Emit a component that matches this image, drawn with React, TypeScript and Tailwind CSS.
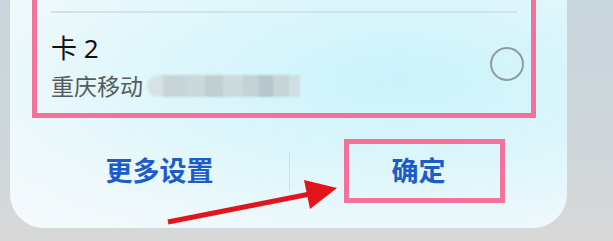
import React from "react";

export default function App() {
  const font = { fontFamily: '"Noto Sans", "Noto Sans CJK SC", sans-serif' };
  return (
    <div
      className="relative w-[613px] h-[241px] overflow-hidden bg-[linear-gradient(180deg,#c8d5dc_0%,#cfd7db_60%,#d8d8d8_100%)]"
      style={font}
    >
      <div className="ml-[10px] w-[557px] h-[228px] rounded-b-[34px] overflow-hidden bg-[radial-gradient(ellipse_at_70%_35%,#c9f3fb_0%,#dcf6fb_40%,#eef9fc_75%,#f6fafc_100%)] flex flex-col">
        <div className="ml-[22px] w-[504px] h-[128px] -mt-[10px] border-[5px] border-[#f2729a] flex flex-col px-[14px]">
          <div className="mt-[16px] h-[2px] bg-[#cfe4e8]" />
          <div className="flex items-center justify-between mt-[19px]">
            <div className="flex flex-col">
              <div className="text-[26px] leading-[32px] text-[#111111]">卡 2</div>
              <div className="flex items-center mt-[9px]">
                <span className="text-[23px] leading-[26px] text-[#555b5e]">重庆移动</span>
                <div className="ml-[4px] flex h-[22px] w-[153px] blur-[1px] opacity-80">
                  <div className="w-[16px] bg-[#d6dee2] rounded-l-full" />
                  <div className="w-[22px] bg-[#c2ccd0]" />
                  <div className="w-[20px] bg-[#c8d1d5]" />
                  <div className="w-[18px] bg-[#bcc6ca]" />
                  <div className="w-[20px] bg-[#cbd4d8]" />
                  <div className="w-[16px] bg-[#c0c9cd]" />
                  <div className="w-[14px] bg-[#b2babe]" />
                  <div className="w-[16px] bg-[#c4cdd1]" />
                  <div className="w-[11px] bg-[#d2dadd]" />
                </div>
              </div>
            </div>
            <div className="w-[34px] h-[34px] rounded-full border-2 border-[#8d9d9d] mr-[-7px] mt-[-4px]" />
          </div>
        </div>
        <div className="flex items-center mt-[21px] h-[64px]">
          <div className="w-[279px] flex justify-center pl-[20px]">
            <span className="text-[27px] font-bold text-[#1d5bc8]">更多设置</span>
          </div>
          <div className="w-[1px] h-[40px] bg-[#d5dde0]" />
          <div className="ml-[54px] w-[161px] h-[64px] border-[5px] border-[#f2729a] flex items-center justify-center pr-[12px]">
            <span className="text-[27px] font-bold text-[#1d5bc8]">确定</span>
          </div>
        </div>
      </div>
      <svg className="absolute left-0 top-0" width="613" height="241" viewBox="0 0 613 241">
        <line x1="168" y1="222" x2="310" y2="194" stroke="#e3141c" strokeWidth="5" />
        <polygon points="337,188 304,180 310,209" fill="#e3141c" />
      </svg>
    </div>
  );
}
